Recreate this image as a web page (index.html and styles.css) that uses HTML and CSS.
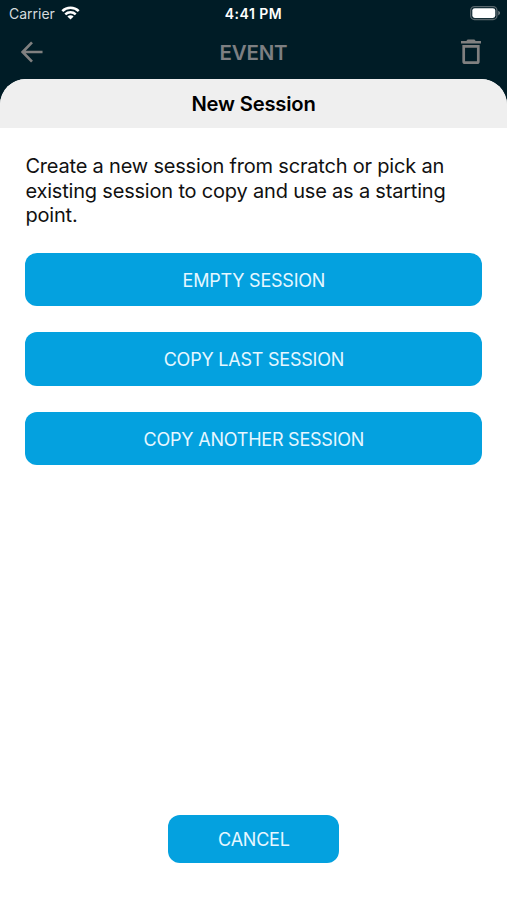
FILE: index.html
```html
<!DOCTYPE html>
<html lang="en">
<head>
<meta charset="utf-8">
<title>New Session</title>
<link rel="stylesheet" href="styles.css">
</head>
<body>
<div class="screen">
  <div class="status-bar">
    <div class="carrier">
      <span>Carrier</span>
      <svg class="wifi" viewBox="0 0 18 14" width="19" height="14">
        <g fill="none" stroke="#fff" stroke-width="2.5">
          <path d="M.8 5.2a11.6 11.6 0 0 1 16.4 0"/>
          <path d="M3.8 8.3a7.4 7.4 0 0 1 10.4 0"/>
        </g>
        <path fill="#fff" d="M9 13.6 5.9 10.5a4.4 4.4 0 0 1 6.2 0z"/>
      </svg>
    </div>
    <span class="time">4:41 PM</span>
    <svg class="battery" viewBox="0 0 31 15" width="31" height="15">
      <rect x=".7" y=".7" width="26.2" height="12.8" rx="3.8" fill="none" stroke="#59676d" stroke-width="1.3"/>
      <rect x="2.3" y="2.2" width="23" height="9.8" rx="2.4" fill="#fff"/>
      <path d="M28.3 4.8c2.3 1.2 2.3 3.4 0 4.6z" fill="#7d888c"/>
    </svg>
  </div>
  <header class="nav">
    <svg class="back" viewBox="0 0 24 24" width="22" height="22">
      <path d="M23.5 12H2M12 1.5 1.8 12 12 22.5" fill="none" stroke="#808080" stroke-width="2.9"/>
    </svg>
    <h1 class="nav-title">EVENT</h1>
    <svg class="trash" viewBox="0 0 20 26" width="20" height="26">
      <path d="M0 2h5.3l1.3-1.4h6.8L14.7 2H20v2.6H0z" fill="#808080"/>
      <path d="M2.7 7.3h14.6v15.1q0 1.3-1.3 1.3H4q-1.3 0-1.3-1.3z" fill="none" stroke="#808080" stroke-width="2.7"/>
    </svg>
  </header>
  <main class="sheet">
    <h2 class="sheet-title">New Session</h2>
    <div class="content">
      <p class="intro">Create a new session from scratch or pick an existing session to copy and use as a starting point.</p>
      <div class="actions">
        <button class="button">EMPTY SESSION</button>
        <button class="button">COPY LAST SESSION</button>
        <button class="button">COPY ANOTHER SESSION</button>
      </div>
      <button class="button cancel">CANCEL</button>
    </div>
  </main>
</div>
</body>
</html>
```
FILE: styles.css
```css
* { box-sizing: border-box; }

body {
  margin: 0;
  font-family: Inter, "Liberation Sans", sans-serif;
  color: #111;
}

.screen {
  display: flex;
  flex-direction: column;
  width: 507px;
  height: 900px;
  background: #001c26;
  overflow: hidden;
}

.status-bar {
  display: grid;
  grid-template-columns: 1fr auto 1fr;
  align-items: center;
  height: 27px;
  padding: 0 6px 0 9px;
  color: #fff;
  font-size: 14px;
}

.carrier {
  display: flex;
  align-items: center;
  gap: 6px;
  color: #d5dbdd;
}

.wifi { margin-bottom: 1px; }

.time {
  margin-left: -3px;
  font-weight: 600;
  font-size: 14px;
  letter-spacing: .5px;
}

.battery { justify-self: end; }

.nav {
  display: flex;
  align-items: center;
  justify-content: space-between;
  height: 52px;
  padding: 0 26px 2px 21px;
}

.nav-title {
  margin: 0 0 0 3px;
  color: #7d7f82;
  font-size: 20.5px;
  font-weight: 600;
  letter-spacing: -.2px;
}

.sheet {
  display: flex;
  flex: 1;
  flex-direction: column;
  background: #fff;
  border-radius: 26px 26px 0 0;
  overflow: hidden;
}

.sheet-title {
  height: 49px;
  margin: 0;
  background: #efefef;
  color: #000;
  font-size: 20.2px;
  font-weight: 600;
  letter-spacing: -.18px;
  line-height: 50px;
  text-align: center;
}

.content {
  display: flex;
  flex: 1;
  flex-direction: column;
  padding: 26px 24.6px 37px 25.4px;
}

.intro {
  margin: 0 0 25.2px;
  font-size: 20px;
  letter-spacing: -.19px;
  line-height: 24.6px;
}

.actions {
  display: flex;
  flex-direction: column;
  gap: 26px;
}

.button {
  height: 53.4px;
  padding: 1.6px 0 0;
  border: 0;
  border-radius: 12px;
  background: #04a1df;
  color: #e6f7ff;
  font: 400 18px Inter, "Liberation Sans", sans-serif;
  letter-spacing: -.22px;
}

.cancel {
  align-self: center;
  width: 171px;
  height: 48.4px;
  margin-top: auto;
}
```
